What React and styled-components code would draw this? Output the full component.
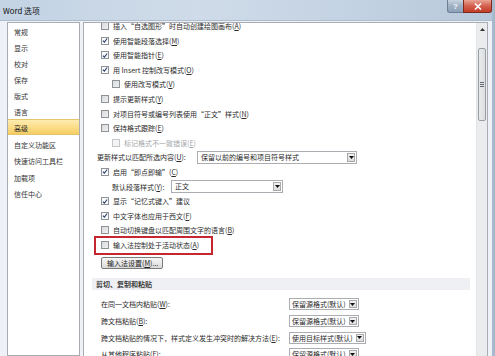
import React from 'react';
import styled, { createGlobalStyle } from 'styled-components';

const GlobalStyle = createGlobalStyle`
  html, body {
    margin: 0;
    padding: 0;
    overflow: hidden;
    background: #eef1f5;
  }
  body {
    font-family: "Noto Sans CJK SC", "Liberation Sans", sans-serif;
    color: #1e1e1e;
  }
`;

const NAV_ITEMS = [
  { label: '常规' },
  { label: '显示' },
  { label: '校对' },
  { label: '保存' },
  { label: '版式' },
  { label: '语言' },
  { label: '高级', active: true, sepAfter: true },
  { label: '自定义功能区' },
  { label: '快速访问工具栏', sepAfter: true },
  { label: '加载项' },
  { label: '信任中心' },
];

const PASTE_ROWS = [
  { label: '在同一文档内粘贴', key: 'W', value: '保留源格式(默认)' },
  { label: '跨文档粘贴', key: 'B', value: '保留源格式(默认)' },
  { label: '跨文档粘贴的情况下，样式定义发生冲突时的解决方法', key: 'E', value: '使用目标样式(默认)' },
  { label: '从其他程序粘贴', key: 'F', value: '保留源格式(默认)' },
];

const Key = ({ k }) => (
  <>(<u>{k}</u>)</>
);

const CheckBox = ({ checked, dim }) => (
  <Box checked={checked} dim={dim}>
    {checked && (
      <svg width="7" height="7" viewBox="0 0 7 7">
        <path d="M1 3.6 L2.8 5.4 L6 1.2" fill="none" stroke="#2b3f6b" strokeWidth="1.3" />
      </svg>
    )}
  </Box>
);

const CheckRow = ({ checked, indent, dim, highlight, children }) => (
  <Row indent={indent} highlight={highlight}>
    <CheckBox checked={checked} dim={dim} />
    <Label dim={dim}>{children}</Label>
  </Row>
);

const Select = ({ value, width }) => (
  <SelectBox style={width ? { width } : null}>
    <SelectText>{value}</SelectText>
    <SelectArrow>
      <svg width="5" height="3" viewBox="0 0 5 3">
        <path d="M0 0 H5 L2.5 3 Z" fill="#111" />
      </svg>
    </SelectArrow>
  </SelectBox>
);

const App = () => {
  return (
    <>
      <GlobalStyle />
      <Window>
        <TitleBar>
          <Title>Word 选项</Title>
          <Controls>
            <HelpBtn>?</HelpBtn>
            <CloseBtn>
              <svg width="8" height="7" viewBox="0 0 8 7">
                <path d="M1 0.5 L7 6.5 M7 0.5 L1 6.5" stroke="#fff" strokeWidth="1.6" />
              </svg>
            </CloseBtn>
          </Controls>
        </TitleBar>

        <Body>
          <Nav>
            {NAV_ITEMS.map((item) => (
              <React.Fragment key={item.label}>
                <NavItem active={item.active}>{item.label}</NavItem>
                {item.sepAfter && <NavSep />}
              </React.Fragment>
            ))}
          </Nav>

          <Main>
            <Content>
              <CheckRow>插入“自选图形”时自动创建绘图画布<Key k="A" /></CheckRow>
              <CheckRow checked>使用智能段落选择<Key k="M" /></CheckRow>
              <CheckRow checked>使用智能指针<Key k="E" /></CheckRow>
              <CheckRow checked>用 Insert 控制改写模式<Key k="O" /></CheckRow>
              <CheckRow indent>使用改写模式<Key k="V" /></CheckRow>
              <CheckRow>提示更新样式<Key k="Y" /></CheckRow>
              <CheckRow>对项目符号或编号列表使用“正文”样式<Key k="N" /></CheckRow>
              <CheckRow>保持格式跟踪<Key k="E" /></CheckRow>
              <CheckRow indent dim>标记格式不一致错误<Key k="E" /></CheckRow>
              <Row plain>
                <FieldLabel width={100}>更新样式以匹配所选内容<Key k="U" />:</FieldLabel>
                <Select value="保留以前的编号和项目符号样式" width={160} />
              </Row>
              <CheckRow checked>启用“即点即输”<Key k="C" /></CheckRow>
              <Row indent plain>
                <FieldLabel width={59}>默认段落样式<Key k="Y" />:</FieldLabel>
                <Select value="正文" width={112} />
              </Row>
              <CheckRow checked>显示“记忆式键入”建议</CheckRow>
              <CheckRow checked>中文字体也应用于西文<Key k="F" /></CheckRow>
              <CheckRow>自动切换键盘以匹配周围文字的语言<Key k="B" /></CheckRow>
              <CheckRow highlight>输入法控制处于活动状态<Key k="A" /></CheckRow>

              <ButtonRow>
                <Button>输入法设置<Key k="M" />...</Button>
              </ButtonRow>

              <Section>剪切、复制和粘贴</Section>

              <PasteGrid>
                {PASTE_ROWS.map((row) => (
                  <PasteRow key={row.label}>
                    <Label>{row.label}<Key k={row.key} />:</Label>
                    <Select value={row.value} />
                  </PasteRow>
                ))}
              </PasteGrid>
            </Content>

            <ScrollBar>
              <ScrollArrow>
                <svg width="5" height="3" viewBox="0 0 5 3">
                  <path d="M0 3 H5 L2.5 0 Z" fill="#333" />
                </svg>
              </ScrollArrow>
              <Thumb>
                <Grip />
              </Thumb>
            </ScrollBar>
          </Main>
        </Body>
      </Window>
    </>
  );
};

const Window = styled.div`
  width: 495px;
  height: 356px;
  display: flex;
  flex-direction: column;
  box-sizing: border-box;
  background: #eef1f5;
  border-right: 3px solid #a6b8cc;
  overflow: hidden;
`;

const TitleBar = styled.div`
  height: 21px;
  flex-shrink: 0;
  display: flex;
  align-items: flex-start;
  justify-content: space-between;
  background: linear-gradient(90deg, #c3d3e4 0%, #cfdbe8 40%, #c2d1e2 75%, #b7c8da 100%);
  border-bottom: 1px solid #aebdcd;
  box-sizing: border-box;
`;

const Title = styled.div`
  font-family: "Noto Sans CJK SC", "Liberation Sans", sans-serif;
  font-size: 7.8px;
  line-height: 21px;
  padding-left: 3px;
  color: #111;
`;

const Controls = styled.div`
  display: flex;
  align-items: flex-start;
`;

const HelpBtn = styled.div`
  width: 16px;
  height: 13px;
  display: flex;
  align-items: center;
  justify-content: center;
  box-sizing: border-box;
  font-family: "Liberation Sans", sans-serif;
  font-size: 8px;
  font-weight: bold;
  color: #f4f6f8;
  background: linear-gradient(180deg, #c8d3df 0%, #9fb0c3 50%, #8ea2b8 100%);
  border: 1px solid #6e8096;
  border-top: none;
  border-right: none;
  border-radius: 0 0 0 3px;
`;

const CloseBtn = styled.div`
  width: 29px;
  height: 13px;
  display: flex;
  align-items: center;
  justify-content: center;
  box-sizing: border-box;
  background: linear-gradient(180deg, #e8a496 0%, #d3604d 50%, #c23d28 100%);
  border: 1px solid #7f2a1f;
  border-top: none;
  border-radius: 0 0 3px 0;
`;

const Body = styled.div`
  flex: 1;
  display: flex;
  gap: 3px;
  padding: 1px 4px 0 7px;
  min-height: 0;
`;

const Nav = styled.div`
  width: 73px;
  flex-shrink: 0;
  box-sizing: border-box;
  background: #fff;
  border: 1px solid #a9adb3;
  padding-top: 0;
  display: flex;
  flex-direction: column;

  & > * {
    flex-shrink: 0;
  }
`;

const NavItem = styled.div`
  height: 16px;
  line-height: 16px;
  padding-left: 6px;
  font-size: 7px;
  color: ${(p) => (p.active ? '#2b2b2b' : '#333')};
  box-sizing: border-box;
  background: ${(p) =>
    p.active ? 'linear-gradient(180deg, #fdecb0 0%, #fbdc86 55%, #f5cd63 100%)' : 'transparent'};
  border: 1px solid ${(p) => (p.active ? '#e6c46a' : 'transparent')};
  border-left: none;
  border-right: none;
`;

const NavSep = styled.div`
  height: 1px;
`;

const Main = styled.div`
  flex: 1;
  display: flex;
  box-sizing: border-box;
  background: #fff;
  border: 1px solid #a9adb3;
  border-bottom: none;
  overflow: hidden;
  min-width: 0;
`;

const Content = styled.div`
  flex: 1;
  display: flex;
  flex-direction: column;
  margin-top: -4.3px;
  padding-left: 17px;
  min-width: 0;

  & > * {
    flex-shrink: 0;
  }
`;

const Row = styled.div`
  height: 14.6px;
  display: flex;
  align-items: center;
  gap: ${(p) => (p.plain ? '0' : '4px')};
  padding-left: ${(p) => (p.indent ? '11px' : '0')};
  margin-left: ${(p) => (p.plain && !p.indent ? '-4px' : '0')};
  box-sizing: border-box;
  align-self: ${(p) => (p.highlight ? 'flex-start' : 'stretch')};
  ${(p) =>
    p.highlight &&
    `
    outline: 2px solid #c5262f;
    outline-offset: 0;
    margin-left: -5px;
    padding-left: 5px;
    padding-right: 12px;
    height: 15px;
  `}
`;

const Box = styled.span`
  width: 8px;
  height: 8px;
  flex-shrink: 0;
  box-sizing: border-box;
  display: flex;
  align-items: center;
  justify-content: center;
  border: 1px solid ${(p) => (p.dim ? '#c4c6c9' : '#8f9397')};
  background: ${(p) =>
    p.checked ? '#fafbfc' : p.dim ? '#f4f4f4' : 'linear-gradient(135deg, #d9dadc 0%, #eef0f2 100%)'};
`;

const Label = styled.span`
  font-size: 7px;
  white-space: nowrap;
  color: ${(p) => (p.dim ? '#a4a7ab' : '#2a2a2a')};
  u {
    text-underline-offset: 1px;
  }
`;

const FieldLabel = styled(Label)`
  width: ${(p) => p.width}px;
  flex-shrink: 0;
`;

const SelectBox = styled.div`
  height: 13px;
  display: inline-flex;
  align-items: stretch;
  box-sizing: border-box;
  border: 1px solid #abadb3;
  background: #fff;
`;

const SelectText = styled.span`
  flex: 1;
  font-size: 7px;
  line-height: 11px;
  padding: 0 3px 0 3px;
  white-space: nowrap;
  overflow: hidden;
  color: #2a2a2a;
`;

const SelectArrow = styled.span`
  width: 8px;
  flex-shrink: 0;
  display: flex;
  align-items: center;
  justify-content: center;
  margin: 1px;
  background: linear-gradient(180deg, #f2f2f2 0%, #dcdcdc 100%);
  border: 1px solid #a9a9a9;
  box-sizing: border-box;
`;

const ButtonRow = styled.div`
  display: flex;
  margin-top: 4.4px;
`;

const Button = styled.div`
  height: 12px;
  padding: 0 4px 0 5px;
  display: flex;
  align-items: center;
  font-size: 7px;
  color: #222;
  box-sizing: border-box;
  background: linear-gradient(180deg, #f6f6f6 0%, #e9e9e9 50%, #d8d8d8 100%);
  border: 1px solid #7b7b7b;
  border-radius: 2px;
`;

const Section = styled.div`
  margin: 9px 0 0 -9px;
  width: 378px;
  height: 12px;
  line-height: 12px;
  padding-left: 4px;
  box-sizing: border-box;
  background: #eef0f3;
  font-size: 7px;
  font-weight: bold;
  color: #3d3d3d;
`;

const PasteGrid = styled.div`
  margin-top: 6px;
  display: flex;
  flex-direction: column;
`;

const PasteRow = styled.div`
  height: 16.7px;
  flex-shrink: 0;
  display: grid;
  grid-template-columns: 188px auto;
  align-items: center;
  justify-content: start;

  ${SelectBox} {
    height: 12px;
  }
  ${SelectText} {
    line-height: 10px;
    padding: 0 2px;
  }
`;

const ScrollBar = styled.div`
  width: 10px;
  flex-shrink: 0;
  display: flex;
  flex-direction: column;
  align-items: center;
  background: #ebecee;
  border-left: 1px solid #e2e3e5;
`;

const ScrollArrow = styled.div`
  height: 11px;
  margin-top: 1px;
  display: flex;
  align-items: center;
  justify-content: center;
`;

const Thumb = styled.div`
  margin-top: 13px;
  width: 8px;
  height: 73px;
  flex-shrink: 0;
  box-sizing: border-box;
  border: 1px solid #9a9ea3;
  border-radius: 2px;
  background: linear-gradient(90deg, #e9eaec 0%, #dcdee1 100%);
  display: flex;
  align-items: center;
  justify-content: center;
`;

const Grip = styled.div`
  width: 4px;
  height: 5px;
  background: repeating-linear-gradient(180deg, #666a70 0px, #666a70 1px, transparent 1px, transparent 2px);
`;

export default App;
